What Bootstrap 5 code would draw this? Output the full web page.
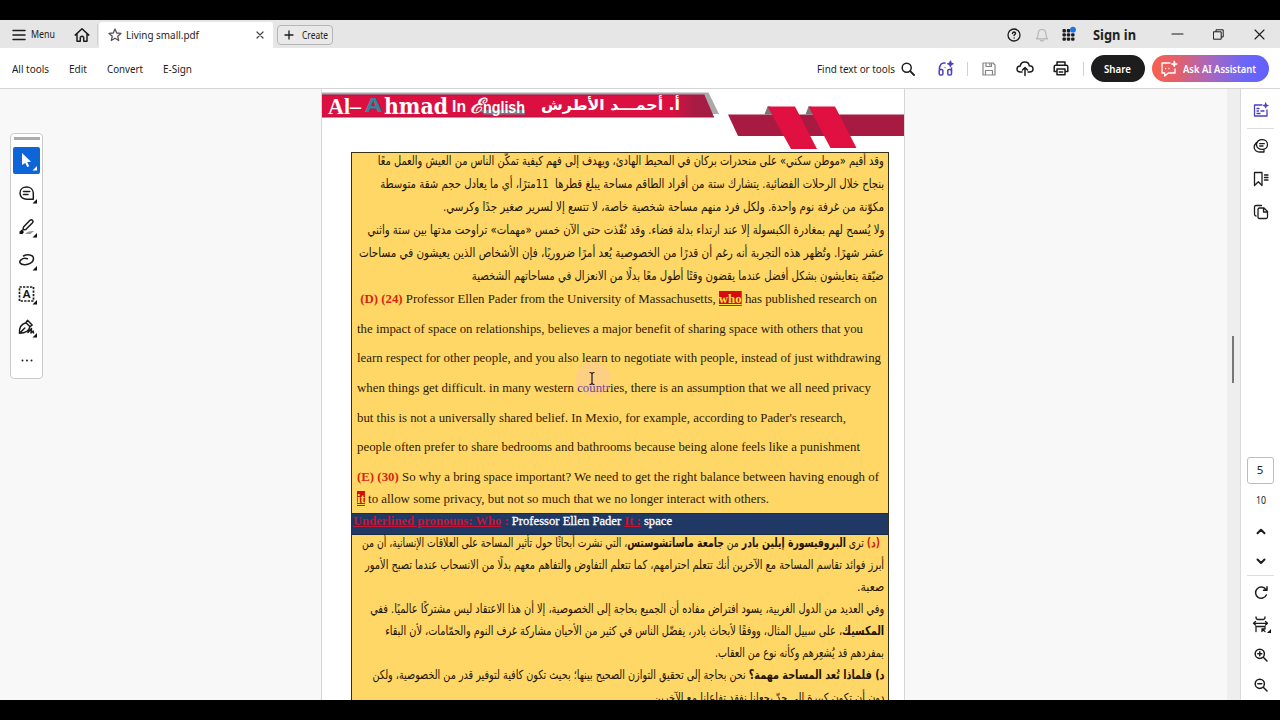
<!DOCTYPE html>
<html lang="en">
<head>
<meta charset="utf-8">
<meta name="viewport" content="width=device-width, initial-scale=1">
<title>Living small.pdf</title>
<link href="https://cdn.jsdelivr.net/npm/bootstrap@5.3.0/dist/css/bootstrap.min.css" rel="stylesheet">
<style>
body{width:1280px;height:720px;overflow:hidden;background:#000;color:#222;font:11.5px/1.2 "Noto Sans","Open Sans",sans-serif}
svg{display:block;flex:none}
.ic{fill:none;stroke:#1c1c1c;stroke-width:1.5;stroke-linecap:round;stroke-linejoin:round}
.muted-ic{stroke:#858585}
.violet-ic{stroke:#4b3fc4}
.fit{display:inline-block;white-space:nowrap;transform-origin:0 50%}
[dir=rtl] .fit{transform-origin:100% 50%}
.tabbar{height:28px;margin-top:20px;background:#e6e6e6;display:grid;grid-template-columns:12px 19px 43px 23px 2px 174px 4px 56px 1fr 28px 27px 29px 80px 42px 41px 26px;align-items:center;grid-template-rows:28px}
.drop{margin-top:2px}
.tab-doc{background:#fff;height:26px;align-self:end;padding:0 9px;border-radius:3px 3px 0 0}
.create-btn{height:20px;margin-top:2px;border:1px solid #b5b5b5;border-radius:4px;padding:0 6px;background:#e9e9e9}
.sign{font-size:14px;font-weight:700;margin-left:2px}
.toolbar{height:41px;background:#fff;border-bottom:1px solid #d5d5d5;display:grid;grid-template-columns:12px 57px 38px 56px 1fr 84px 37px 29px 15px 34px 37px 30px 8px 61px 128px;align-items:center;padding-top:1px}
.toolbar .fit{margin-top:1px}
.vline{width:1px;height:14px;background:#d2d2d2}
.pill{height:27px;border-radius:14px;color:#fff;font-weight:600;display:flex;align-items:center}
.share{width:54px;background:#1d1d1d;padding-left:13px}
.ask{width:117px;background:linear-gradient(90deg,#f9604f 0%,#e2606c 22%,#a767c0 50%,#6a66fa 80%,#6260ff 100%);padding-left:9px}
.work{height:611px;background:#f8f8f8}
.side-l{width:321px;padding:44px 0 0 10px}
.palette{width:33px;height:246px;border:1px solid #cbcbcb;border-radius:4px;background:#fff}
.grip{width:26px;height:3px;background:#acacac;margin:3px auto 7px}
.tool{width:27px;height:27px;border-radius:2px;margin:0 auto 6.4px}
.tool.on{background:#0d66d8}
.sheet{width:584px;background:#fff;border:solid #d6d6d6;border-width:0 1px;overflow:hidden}
.sheet-head{height:63px}
.frame{width:538px;margin-left:29px;border:1px solid #33331c;border-bottom:0;height:548px;overflow:hidden;background:#ffd766}
.en{font-family:"Liberation Serif",serif;font-size:13px;color:#2d1b08}
.ar{font-family:"DejaVu Sans",sans-serif;font-size:12.5px;color:#241403}
.sec-a{height:134.7px;padding:0 4px}
.sec-a .ln{height:22.9px}
.sec-a .ln:first-child{margin-top:-3.5px}
.sec-b{height:228.8px;padding-left:5px}
.sec-b .ln{height:29.6px}
.sec-b .ln:last-child{height:22px;margin-top:-4px}
.sec-c{height:22px;background:#203864;border:solid #192a45;border-width:1px 0;padding-left:1px;font-weight:700;line-height:14px}
.sec-c .white{color:#fff;font-weight:400;-webkit-text-stroke:.3px}
.sec-d{padding:0 4px}
.sec-d .ln{height:22.15px}
.sec-d .ln:first-child{margin-top:-4px}
.ln{display:flex;align-items:center}
.rd{color:#d8260f}
.pr{color:#c61632;text-decoration:underline}
.glow{color:#2a0a86}
.hot{background:#d50d0d;color:#ffe14a;text-decoration:underline;text-decoration-style:double;display:inline-block;line-height:15px}
.track{width:13px;margin-left:auto;background:#eee;padding:247px 0 0 5px}
.thumb{width:2px;height:47px;background:#777}
.rail{width:40px;border-left:1px solid #d9d9d9;background:#fff}
.rail>div{display:flex;align-items:center;justify-content:center}
.rail .nudge{padding-left:1px}
.h33{height:33px}.h30{height:30px}
.rline{height:1px;width:27px;background:#dedede;margin-left:6px}
.pagebox{width:27px;height:27px;border:1px solid #bdbdbd;border-radius:3px;margin:229px 0 0 6px;padding:0 1px 2px 0}
.pointer{left:574px;top:361px;z-index:3}
</style>
</head>
<body>
<header class="tabbar">
 <span></span>
 <svg width="14" height="14" viewBox="0 0 14 14" class="ic drop"><path d="M1 2.500h12M1 7h12M1 11.500h12"/></svg>
 <span class="fit" data-w="24">Menu</span>
 <svg width="16" height="16" viewBox="0 0 16 16" class="ic drop"><path d="M1.200 8.100 8 1.700l6.800 6.400M3 7.300v6.900h3.300v-4q1.700-2 3.400 0v4H13V7.300"/></svg>
 <span class="vline h-75"></span>
 <div class="tab-doc d-flex align-items-center">
  <svg width="14" height="14" viewBox="0 0 14 14" class="ic muted-ic"><path stroke="#555" stroke-width="1.300" d="m7 1 1.700 4 4.300.4-3.300 2.800 1 4.300L7 10.200l-3.700 2.300 1-4.300L1 5.400 5.300 5z"/></svg>
  <span class="fit ms-1" data-w="73">Living small.pdf</span>
  <svg class="ms-auto ic" width="8" height="8" viewBox="0 0 8 8"><path stroke="#444" stroke-width="1.200" d="m1 1 6 6M7 1 1 7"/></svg>
 </div>
 <span></span>
 <div class="create-btn d-flex align-items-center">
  <svg width="10" height="10" viewBox="0 0 10 10" class="ic"><path stroke-width="1.300" d="M5 1v8M1 5h8"/></svg>
  <span class="fit ms-2" data-w="26">Create</span>
 </div>
 <span></span>
 <svg width="14" height="14" viewBox="0 0 14 14" class="ic drop"><circle cx="7" cy="7" r="6" stroke-width="1.300"/><path stroke-width="1.400" d="M5.500 5.500q.2-1.500 1.600-1.500 1.500.1 1.400 1.400c0 1-1.400 1.200-1.400 2.200M7.100 9.900v.1"/></svg>
 <svg width="14" height="14" viewBox="0 0 14 14" class="ic drop"><path stroke="#b4b4b4" stroke-width="1.200" d="M1.500 10.800c2-1.500 1.300-3 1.600-5.500C3.400 3 5 1.500 7 1.500s3.600 1.500 3.900 3.800c.3 2.500-.4 4 1.600 5.500zM5.500 12.500q1.500 1 3 0"/></svg>
 <svg width="16" height="16" viewBox="1 0 16 16"><g fill="#1d1d1d"><rect x="1.500" y="3" width="3.400" height="3.400" rx="1"/><rect x="5.800" y="3" width="3.400" height="3.400" rx="1"/><rect x="1.500" y="7.200" width="3.400" height="3.400" rx="1"/><rect x="5.800" y="7.200" width="3.400" height="3.400" rx="1"/><rect x="10.100" y="7.200" width="3.400" height="3.400" rx="1"/><rect x="1.500" y="11.400" width="3.400" height="3.400" rx="1"/><rect x="5.800" y="11.400" width="3.400" height="3.400" rx="1"/><rect x="10.100" y="11.400" width="3.400" height="3.400" rx="1"/></g><circle cx="12" cy="3.700" r="2.900" fill="#1976e8"/></svg>
 <span class="fit sign drop" data-w="43">Sign in</span>
 <svg width="13" height="10" viewBox="0 0 13 10" class="ic"><path stroke-width="1.100" d="M1 5h11"/></svg>
 <svg width="11" height="11" viewBox="0 0 11 11" class="ic"><path stroke-width="1" d="M.8 2.800h7.400v7.400H.8zM3 2.500V.8h7.200V8H8.500"/></svg>
 <svg width="11" height="11" viewBox="0 0 11 11" class="ic"><path stroke-width="1.100" d="m1 1 9 9M10 1 1 10"/></svg>
</header>

<nav class="toolbar">
 <span></span>
 <span class="fit" data-w="37">All tools</span><span class="fit" data-w="18">Edit</span><span class="fit" data-w="36">Convert</span><span class="fit" data-w="29">E-Sign</span>
 <span class="fit mt-0" data-w="78">Find text or tools</span>
 <svg width="14" height="14" viewBox="0 0 14 14" class="ic"><circle cx="5.700" cy="5.700" r="4.500"/><path stroke-width="1.800" d="m9.200 9.200 3.800 3.800"/></svg>
 <svg width="18" height="18" viewBox="1 0 18 18" class="ic violet-ic"><path d="M2.500 10C2 5 4.500 2.400 8 3M14.500 8v3"/><rect x="2.200" y="9.500" width="3.700" height="5.500" rx="1.300"/><rect x="10.800" y="9.500" width="3.700" height="5.500" rx="1.300"/><path d="m13.500 1 .7 2 2 .8-2 .8-.8 2-.8-2-2-.8 2-.8zM8 7.500v.1" stroke-width="1.200" fill="#4b3fc4"/></svg>
 <span class="vline"></span>
 <svg width="14" height="14" viewBox="0 0 14 14" class="ic muted-ic"><path stroke-width="1.200" d="M1 1h10l2 2v10H1zM4 1v3.500h5.500V1M3.500 13V8.500h7V13M7.800 1.800v1.300"/></svg>
 <svg width="18" height="16" viewBox="0 0 18 16" class="ic"><path d="M6 11H4.500C2.500 11 1 9.800 1 8s1.500-3 3.200-3C4.600 2.700 6.500 1 8.800 1s4.200 1.600 4.500 3.800C15.500 4.800 17 6 17 8s-1.500 3-3.500 3H12M9 14.500V6.800M6.500 9 9 6.500 11.500 9"/></svg>
 <svg width="16" height="15" viewBox="0 0 16 15" class="ic"><path d="M4 3.500V1h8v2.500M4 10.500H1.200V5.800q0-1.500 1.500-1.500h10.600q1.500 0 1.500 1.500v4.700H12M4 8h8v5.800H4zM6.300 11h3.400"/></svg>
 <span class="vline"></span>
 <div class="pill share"><span class="fit mt-0" data-w="27">Share</span></div>
 <div class="pill ask"><svg width="18" height="18" viewBox="0 0 18 18" class="ic me-1"><g stroke="#fff"><path stroke-width="1.300" d="M9 3H1v10h2.700v3l3.600-3H14V9M4.600 8.400v.2M8 8.400v.2"/><path d="m13.300 1 .9 2.200 2.200.8-2.200.8-.9 2.200-.9-2.200-2.200-.8 2.200-.8z" fill="#fff" stroke-width=".7"/></g></svg><span class="fit mt-0" data-w="73">Ask AI Assistant</span></div>
</nav>

<main class="work d-flex">
 <aside class="side-l">
  <div class="palette">
   <div class="grip"></div>
   <div class="tool on"><svg width="27" height="27"><path d="m9 6 9 8.700-3.800.4 2 4.100-2 .9-1.900-4.200L9 18z" fill="#fff"/><path d="M24 19v4.500h-4.500z" fill="#fff"/></svg></div>
   <div class="tool"><svg width="27" height="27" class="ic"><path d="M7 13c0-8 13-8 13.300 0v6.200H14C10 19.200 7 17 7 13zM10.500 11.500h6.300M10.500 14.500h4.500"/><path d="M24 19v4.500h-4.500z" fill="#111" stroke="none"/></svg></div>
   <div class="tool"><svg width="27" height="27" class="ic"><path d="M12 20q3-3.500 9-3l-3.500 3z" fill="#999" stroke="none"/><path d="m10.500 13 6.500-6.700q1.300-1 2.500 0 1.200 1.200 0 2.500l-6.700 6.700-2.700.3zM10.300 15.500l-2 1.500"/><path d="M6.500 17.500l2.500-1.500 2 2-1.500 2h-3z" fill="#111" stroke="none"/><path d="M24 19v4.500h-4.500z" fill="#111" stroke="none"/></svg></div>
   <div class="tool"><svg width="27" height="27" class="ic"><path d="M10.500 9C14 7 20.500 7.500 20.500 11.500c0 4-5 6.500-9 6.300-4.500-.2-6-3-3.500-5 1.800-1.500 4.500-1.800 6.500-1"/><path d="M24 19v4.500h-4.500z" fill="#111" stroke="none"/></svg></div>
   <div class="tool"><svg width="27" height="27" class="ic"><rect x="6.500" y="6" width="14" height="14" stroke-width="1.700" stroke-dasharray="2.300 1.200" stroke-linecap="butt"/><text x="13.500" y="17" text-anchor="middle" font-size="11.500" font-weight="600" fill="#111" stroke="none">A</text><path d="M24 19v4.500h-4.500z" fill="#111" stroke="none"/></svg></div>
   <div class="tool"><svg width="27" height="27" class="ic"><path d="M6.500 19.200c-.5-6 2-9.300 6.500-10.500l4 4c-1 4.500-4.500 6.500-10.500 6.500zM6.800 19l5-5M13 8.500l1.500-2.200 4.700 4.700-2.200 1.700M15 18.500l3.500-4-.5 4.500 2.200-2 .3 2"/><path d="M24 19v4.500h-4.500z" fill="#111" stroke="none"/></svg></div>
   <div class="tool"><svg width="27" height="27" fill="#222"><circle cx="9.500" cy="13.500" r="1"/><circle cx="14" cy="13.500" r="1"/><circle cx="18.500" cy="13.500" r="1"/></svg></div>
  </div>
 </aside>

 <article class="sheet">
  <svg class="sheet-head" width="582" height="63" viewBox="322 89 582 63">
   <defs><linearGradient id="g" x1="0" x2="1"><stop offset="0" stop-color="#dc1040"/><stop offset=".89" stop-color="#dc1040"/><stop offset=".95" stop-color="#a71c45"/></linearGradient></defs>
   <path d="M322 92.500H708.500L719 114H700V96H322z" fill="#aaa"/>
   <path d="M322 95h382.500L714 117H322z" fill="url(#g)"/><path d="M322 95H704.500M322 117H714" stroke="#a51743" fill="none"/>
   <path d="M728 114.500H904V136H738z" fill="#a71b43"/>
   <path d="m764.500 114.500 3-8h3l3 8zM805.500 114.500l3-8h3l3 8z" fill="#777"/>
   <path d="M767.500 106.500H795L817 149H791zM808.500 106.500H835L856.500 148H830.500z" fill="#e01041"/>
   <text x="328" y="114" font-family="Liberation Serif" font-weight="700" font-size="23" fill="#fff" textLength="33" lengthAdjust="spacingAndGlyphs">Al–</text>
   <text x="365" y="111.500" font-family="Noto Sans" font-weight="700" font-size="20" fill="#35849c" textLength="17" lengthAdjust="spacingAndGlyphs">A</text>
   <text x="384" y="113.500" font-family="DejaVu Serif" font-weight="700" font-size="22" fill="#fff" textLength="64" lengthAdjust="spacingAndGlyphs">hmad</text>
   <text x="452" y="112" font-family="Liberation Sans" font-weight="700" font-size="16" fill="#fff" textLength="14" lengthAdjust="spacingAndGlyphs">In</text>
   <path d="M480 110h45v4.500h-41z" fill="#777b8a"/>
   <text x="470" y="113" font-family="DejaVu Serif" font-style="italic" font-size="21" fill="#fff" stroke="#fff" stroke-width=".4" textLength="14" lengthAdjust="spacingAndGlyphs">ℰ</text>
   <text x="483" y="112.500" font-family="Liberation Sans" font-weight="700" font-size="17" fill="#fff" textLength="42" lengthAdjust="spacingAndGlyphs">nglish</text>
   <text x="680" y="110" direction="rtl" font-family="DejaVu Sans" font-weight="700" font-size="15" fill="#fff" textLength="139" lengthAdjust="spacingAndGlyphs">أ. أحمـــد الأطرش</text>
  </svg>
  <div class="frame">
   <section class="sec-a ar" dir="rtl" lang="ar">
    <div class="ln"><span class="fit" data-w="506">وقد أقيم «موطن سكني» على منحدرات بركان في المحيط الهادئ، ويهدف إلى فهم كيفية تمكّن الناس من العيش والعمل معًا</span></div>
    <div class="ln"><span class="fit" data-w="504">بنجاح خلال الرحلات الفضائية. يتشارك ستة من أفراد الطاقم مساحة يبلغ قطرها &nbsp;11مترًا، أي ما يعادل حجم شقة متوسطة</span></div>
    <div class="ln"><span class="fit" data-w="441">مكوّنة من غرفة نوم واحدة. ولكل فرد منهم مساحة شخصية خاصة، لا تتسع إلا لسرير صغير جدًا وكرسي.</span></div>
    <div class="ln"><span class="fit" data-w="517">ولا يُسمح لهم بمغادرة الكبسولة إلا عند ارتداء بدلة فضاء. وقد نُفّذت حتى الآن خمس «مهمات» تراوحت مدتها بين ستة واثني</span></div>
    <div class="ln"><span class="fit" data-w="525">عشر شهرًا. وتُظهر هذه التجربة أنه رغم أن قدرًا من الخصوصية يُعد أمرًا ضروريًا، فإن الأشخاص الذين يعيشون في مساحات</span></div>
    <div class="ln"><span class="fit" data-w="412">ضيّقة يتعايشون بشكل أفضل عندما يقضون وقتًا أطول معًا بدلًا من الانعزال في مساحاتهم الشخصية</span></div>
   </section>
   <section class="sec-b en">
    <div class="ln"><span class="fit" data-w="520">&nbsp;<b class="rd">(D) (24)</b> Professor Ellen Pader from the University of Massachusetts, <b class="hot">who</b> has published research on</span></div>
    <div class="ln"><span class="fit" data-w="506">the impact of space on relationships, believes a major benefit of sharing space with others that you</span></div>
    <div class="ln"><span class="fit" data-w="524">learn respect for other people, and you also learn to negotiate with people, instead of just withdrawing</span></div>
    <div class="ln"><span class="fit" data-w="514">when things get difficult. in many western <span class="glow">countr</span>ies, there is an assumption that we all need privacy</span></div>
    <div class="ln"><span class="fit" data-w="489">but this is not a universally shared belief. In Mexio, for example, according to Pader's research,</span></div>
    <div class="ln"><span class="fit" data-w="503">people often prefer to share bedrooms and bathrooms because being alone feels like a punishment</span></div>
    <div class="ln"><span class="fit" data-w="522"><b class="rd">(E) (30)</b> So why a bring space important? We need to get the right balance between having enough of</span></div>
    <div class="ln"><span class="fit" data-w="412"><b class="hot">it</b> to allow some privacy, but not so much that we no longer interact with others.</span></div>
   </section>
   <section class="sec-c en"><span class="fit" data-w="319"><span class="pr">Underlined pronouns: Who</span> <span class="pr text-decoration-none">:</span> <span class="white">Professor Ellen Pader</span> <span class="pr">It :</span> <span class="white">space</span></span></section>
   <section class="sec-d ar" dir="rtl" lang="ar">
    <div class="ln pe-1"><span class="fit" data-w="518"><b class="rd">(د)</b> ترى <b>البروفيسورة إيلين بادر</b> من <b>جامعة ماساتشوستس</b>، التي نشرت أبحاثًا حول تأثير المساحة على العلاقات الإنسانية، أن من</span></div>
    <div class="ln"><span class="fit" data-w="519">أبرز فوائد تقاسم المساحة مع الآخرين أنك تتعلم احترامهم، كما تتعلم التفاوض والتفاهم معهم بدلًا من الانسحاب عندما تصبح الأمور</span></div>
    <div class="ln"><span class="fit" data-w="27">صعبة.</span></div>
    <div class="ln"><span class="fit" data-w="514">وفي العديد من الدول الغربية، يسود افتراض مفاده أن الجميع بحاجة إلى الخصوصية، إلا أن هذا الاعتقاد ليس مشتركًا عالميًا. ففي</span></div>
    <div class="ln"><span class="fit" data-w="499"><b>المكسيك</b>، على سبيل المثال، ووفقًا لأبحاث بادر، يفضّل الناس في كثير من الأحيان مشاركة غرف النوم والحمّامات، لأن البقاء</span></div>
    <div class="ln"><span class="fit" data-w="169">بمفردهم قد يُشعِرهم وكأنه نوع من العقاب.</span></div>
    <div class="ln"><span class="fit" data-w="512"><b>د) فلماذا تُعد المساحة مهمة؟</b> نحن بحاجة إلى تحقيق التوازن الصحيح بينها؛ بحيث تكون كافية لتوفير قدر من الخصوصية، ولكن</span></div>
    <div class="ln"><span class="fit" data-w="231">دون أن تكون كبيرة إلى حدّ يجعلنا نفقد تفاعلنا مع الآخرين</span></div>
   </section>
  </div>
 </article>

 <div class="track"><div class="thumb"></div></div>
 <aside class="rail">
  <div style="height:39px;padding-top:3px"><svg width="16" height="16" viewBox="0 0 16 16" class="ic violet-ic"><path stroke-width="1.300" d="M9 3H1.500v11H14V8M4 6.500h2M4 9h1.500M8 9h3M4 11.500h3"/><path d="m12.700 1 .7 1.800 2 .7-2 .7-.7 2-.7-2-2-.7 2-.7z" fill="#4b3fc4" stroke-width=".8"/></svg></div>
  <div class="rline"></div>
  <div class="h33"><svg width="16" height="16" viewBox="0 0 16 16" class="ic"><path stroke-width="1.300" d="M3.500 6.700c0-6.800 11-6.800 11 0 0 6.300-11 6.300-11 0zM3.500 4.500C-.5 8.500 1 13.800 6.500 14H11v-2M6.700 5.700h4.600M6.700 8H10"/></svg></div>
  <div class="h33"><svg width="16" height="16" viewBox="0 0 16 16" class="ic"><path stroke-width="1.300" d="M1.500 1.500h7.500v13l-3.700-3.700-3.800 3.700zM11.500 4H15M11.500 6.500H15M11.500 9H15"/></svg></div>
  <div class="h33"><svg width="16" height="16" viewBox="0 0 16 16" class="ic"><path stroke-width="1.300" d="M6.500 4H11l3.500 3.500v5.500q0 1.500-1.500 1.500H6.500Q5 14.500 5 13V5.500Q5 4 6.500 4zM10.500 4v4h4M3 12q-1.500-.3-1.500-2V3q0-1.500 1.500-1.500h5.500"/></svg></div>
  <div class="pagebox">5</div>
  <div style="height:32px" class="nudge"><span class="fit" data-w="10">10</span></div>
  <div style="height:31px" class="nudge"><svg width="10" height="7" viewBox="0 0 10 7" class="ic"><path stroke-width="2" d="m1.500 5.300 3.500-3.500 3.500 3.500"/></svg></div>
  <div style="height:28px" class="nudge"><svg width="10" height="7" viewBox="0 0 10 7" class="ic"><path stroke-width="2" d="m1.500 1.500 3.500 3.500 3.500-3.500"/></svg></div>
  <div class="rline"></div>
  <div style="height:33px" class="nudge"><svg width="14" height="14" viewBox="0 0 14 14" class="ic"><path d="M11.800 3.500A5.600 5.600 0 1 0 12.300 9M13 .8v3.500H9.500"/></svg></div>
  <div style="height:31px" class="nudge"><svg width="19" height="18" viewBox="-1 0 19 18" class="ic"><path stroke-width="1.300" d="M.5 7.300h14M2.500 5.500.5 7.300l2 1.800M12.500 5.500l2 1.800-2 1.800M3 1q0 2.500 2 2.500h5q2 0 2-2.500M3 15.500V10.500h9v2.500H9v2.500M9 13l3 2.500"/><path d="M18 13v4h-4z" fill="#111" stroke="none"/></svg></div>
  <div class="h30 nudge"><svg width="14" height="14" viewBox="0 0 14 14" class="ic"><circle cx="5.800" cy="5.800" r="4.600"/><path d="m9.300 9.300 3.700 3.700M3.800 5.800h4M5.800 3.800v4"/></svg></div>
  <div class="h30 nudge"><svg width="14" height="14" viewBox="0 0 14 14" class="ic"><circle cx="5.800" cy="5.800" r="4.600"/><path d="m9.300 9.300 3.700 3.700M3.800 5.800h4"/></svg></div>
 </aside>
</main>

<!-- text cursor with its highlight halo, floating over the document -->
<svg class="pointer position-absolute" width="38" height="38" viewBox="0 0 38 38"><circle cx="19" cy="18" r="17.500" fill="#f9c0c0" opacity=".33"/><path d="M15.500 11.500q2.500 0 2.500 1.500 0-1.500 2.500-1.500M18 13v9M15.500 23.500q2.500 0 2.500-1.500 0 1.500 2.500 1.500" fill="none" stroke="#1b1230" stroke-width="1.200"/></svg>

<script src="https://cdn.jsdelivr.net/npm/bootstrap@5.3.0/dist/js/bootstrap.bundle.min.js"></script>
<script>
// Set every measured line to its column width.
document.querySelectorAll('.fit').forEach(function (el) {
  el.style.justifySelf = 'start';
  el.style.flex = 'none';
  var natural = el.getBoundingClientRect().width, w = +el.dataset.w;
  el.style.transform = 'scaleX(' + w / natural + ')';
  el.style.marginInlineEnd = (w - natural) + 'px';
});
</script>
</body>
</html>
